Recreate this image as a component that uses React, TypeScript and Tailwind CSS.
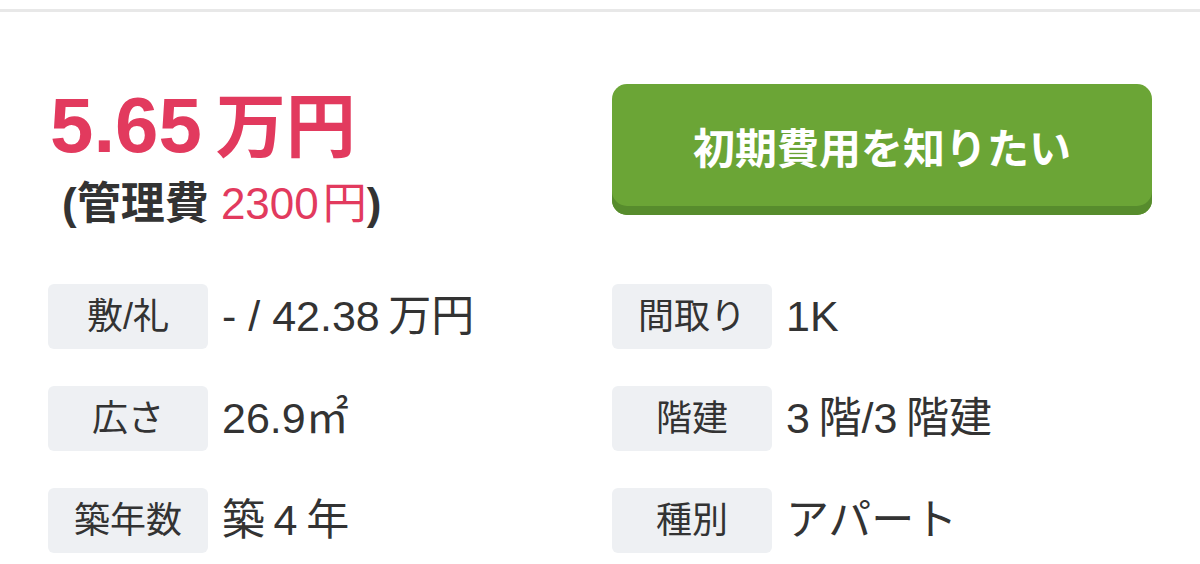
import React from 'react';

const SPECS = [
  { label: '敷/礼', value: '- / 42.38\u2009万円' },
  { label: '間取り', value: '1K' },
  { label: '広さ', value: '26.9㎡' },
  { label: '階建', value: '3\u2009階/3\u2009階建' },
  { label: '築年数', value: '築\u20094\u2009年' },
  { label: '種別', value: 'アパート' },
];

function SpecRow({ label, value }: { label: string; value: string }) {
  return (
    <div className="flex items-center">
      <div className="flex h-[65px] w-[160px] shrink-0 items-center justify-center rounded-[6px] bg-[#eef0f3] text-[36px] text-[#333]">
        {label}
      </div>
      <div className="ml-[14px] whitespace-nowrap text-[43px] text-[#333]">{value}</div>
    </div>
  );
}

export default function App() {
  return (
    <div className="h-[564px] w-[1200px] overflow-hidden bg-white font-['Liberation_Sans','Noto_Sans_CJK_JP',sans-serif]">
      <div className="mt-[9px] h-[3px] bg-[#e8e8e8]" />

      <div className="grid grid-cols-2 gap-x-[24px] px-[48px] pt-[72px]">
        <div className="pl-[2px]">
          <div className="pt-[2px] text-[78px] font-bold leading-[1] text-[#e23a5e]">
            5.65<span className="ml-[14px] text-[70px]">万円</span>
          </div>
          <div className="mt-[18px] ml-[12px] text-[44px] leading-[1] text-[#333]">
            <span className="font-bold">(管理費 </span>
            <span className="text-[#e23a5e]">
              2300<span className="ml-[4px]">円</span>
            </span>
            <span className="font-bold">)</span>
          </div>
        </div>
        <div>
          <button className="flex h-[131px] w-full items-center justify-center rounded-[15px] bg-[#6ba536] text-[42px] font-bold text-white shadow-[inset_0_-9px_0_#578c2d]">
            初期費用を知りたい
          </button>
        </div>
      </div>

      <div className="mt-[58px] grid grid-cols-2 gap-x-[24px] gap-y-[37px] px-[48px]">
        {SPECS.map(s => (
          <SpecRow key={s.label} label={s.label} value={s.value} />
        ))}
      </div>
    </div>
  );
}
